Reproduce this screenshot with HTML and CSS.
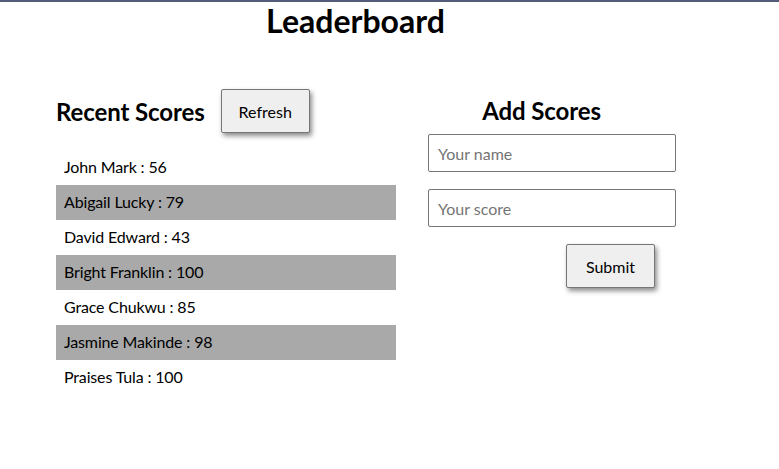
FILE: index.html
```html
<!DOCTYPE html>
<html lang="en">
<head>
<meta charset="utf-8">
<title>Leaderboard</title>
<link rel="stylesheet" href="styles.css">
</head>
<body>
<div class="page">
  <h1 class="title">Leaderboard</h1>
  <main class="main">
    <section class="recent">
      <div class="recent-head">
        <h2 class="heading">Recent Scores</h2>
        <button class="btn" type="button">Refresh</button>
      </div>
      <ul class="scores">
        <li class="score">John Mark : 56</li>
        <li class="score">Abigail Lucky : 79</li>
        <li class="score">David Edward : 43</li>
        <li class="score">Bright Franklin : 100</li>
        <li class="score">Grace Chukwu : 85</li>
        <li class="score">Jasmine Makinde : 98</li>
        <li class="score">Praises Tula : 100</li>
      </ul>
    </section>
    <section class="add">
      <h2 class="heading add-heading">Add Scores</h2>
      <form class="form">
        <input class="field" type="text" placeholder="Your name">
        <input class="field" type="text" placeholder="Your score">
        <div class="form-actions">
          <button class="btn" type="button">Submit</button>
        </div>
      </form>
    </section>
  </main>
</div>
</body>
</html>
```

FILE: styles.css
```css
* { box-sizing: border-box; }

html, body {
  margin: 0;
  padding: 0;
  background: #fff;
}

body {
  border-top: 2px solid #525c76;
  font-family: Lato, "Open Sans", sans-serif;
  color: #000;
}

.page {
  width: 599px;
  margin-left: 56px;
}

.title {
  margin: 0;
  text-align: center;
  font-size: 32px;
  line-height: 38px;
  font-weight: 700;
}

.main {
  display: flex;
  gap: 32px;
  margin-top: 49px;
  align-items: flex-start;
}

.recent {
  width: 340px;
}

.recent-head {
  display: flex;
  align-items: center;
  gap: 16px;
}

.heading {
  margin: 0;
  font-size: 24px;
  line-height: 29px;
  font-weight: 700;
  letter-spacing: -0.1px;
}

.btn {
  font-family: Lato, "Open Sans", sans-serif;
  font-size: 16px;
  color: #000;
  background: #efefef;
  border: 1px solid #767676;
  border-radius: 2px;
  width: 89px;
  height: 44px;
  padding: 0;
  box-shadow: 2px 3px 5px rgba(0, 0, 0, 0.45);
}

.scores {
  list-style: none;
  margin: 17px 0 0;
  padding: 0;
}

.score {
  height: 35px;
  padding: 7px 0 0 8px;
  font-size: 16px;
  line-height: 19px;
  letter-spacing: -0.15px;
}

.score:nth-child(even) {
  background: #a9a9a9;
}

.add {
  width: 227px;
}

.add-heading {
  text-align: center;
  margin: 7px 0 9px;
}

.form {
  display: flex;
  flex-direction: column;
  gap: 17px;
}

.field {
  width: 248px;
  height: 38px;
  border: 1px solid #767676;
  border-radius: 2px;
  padding: 0 9px;
  font-family: Lato, "Open Sans", sans-serif;
  font-size: 16px;
  color: #000;
}

.field::placeholder {
  color: #757575;
}

.form-actions {
  display: flex;
  justify-content: flex-end;
}
```
